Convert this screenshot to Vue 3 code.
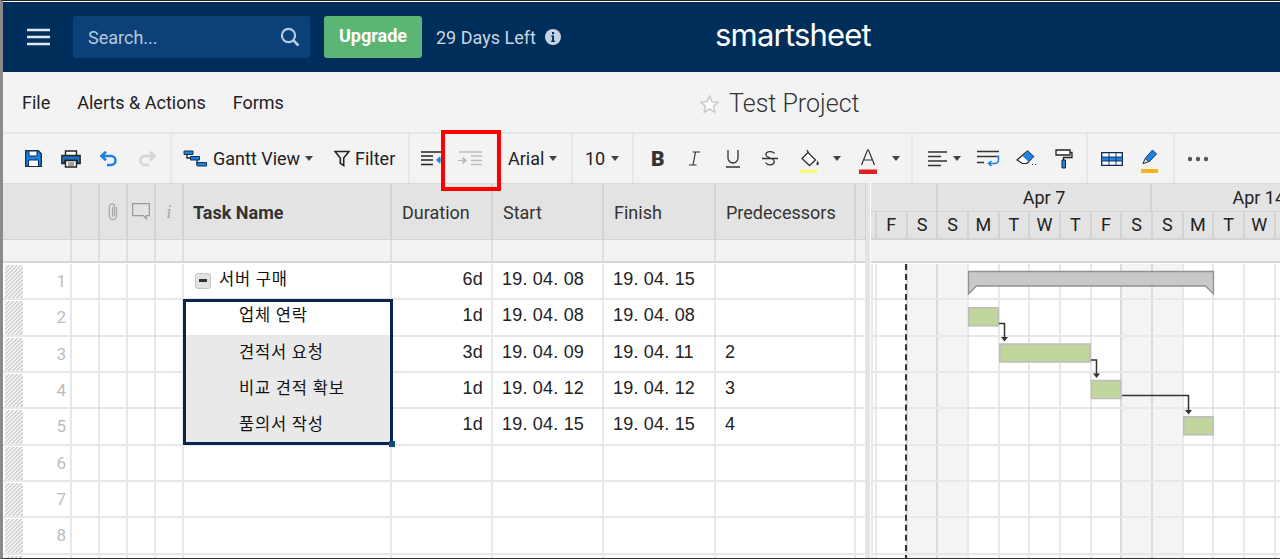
<script setup>
const rows = [
  { n: 1, name: '서버 구매', dur: '6d', start: '19. 04. 08', end: '19. 04. 15', pre: '', parent: true },
  { n: 2, name: '업체 연락', dur: '1d', start: '19. 04. 08', end: '19. 04. 08', pre: '', child: true },
  { n: 3, name: '견적서 요청', dur: '3d', start: '19. 04. 09', end: '19. 04. 11', pre: '2', child: true, sel: true },
  { n: 4, name: '비교 견적 확보', dur: '1d', start: '19. 04. 12', end: '19. 04. 12', pre: '3', child: true, sel: true },
  { n: 5, name: '품의서 작성', dur: '1d', start: '19. 04. 15', end: '19. 04. 15', pre: '4', child: true, sel: true },
  { n: 6 }, { n: 7 }, { n: 8 }, { n: '' }
]
const days = [
  { d: 'F' }, { d: 'S', we: true }, { d: 'S', we: true }, { d: 'M' }, { d: 'T' }, { d: 'W' }, { d: 'T' },
  { d: 'F' }, { d: 'S', we: true }, { d: 'S', we: true }, { d: 'M' }, { d: 'T' }, { d: 'W' }, { d: '' }
]
</script>

<template>
  <div class="page">
    <header class="top">
      <svg class="burger" width="23" height="18" viewBox="0 0 23 18"><path d="M0 2h23M0 9h23M0 16h23" stroke="#dfe7f0" stroke-width="2.6" fill="none"/></svg>
      <div class="search">
        <span>Search...</span>
        <svg width="20" height="20" viewBox="0 0 20 20"><circle cx="8.5" cy="8.5" r="6.6" fill="none" stroke="#b9cbe0" stroke-width="2.2"/><path d="M13.5 13.5l5 5" stroke="#b9cbe0" stroke-width="2.6"/></svg>
      </div>
      <div class="upgrade">Upgrade</div>
      <div class="days">29 Days Left</div>
      <svg class="info" width="16" height="16" viewBox="0 0 16 16"><circle cx="8" cy="8" r="8" fill="#c5d2e2"/><path d="M6.4 6.6h2.6v5.2h1.1v1.3H6v-1.3h1.1V7.9H6.4zM7 3h2.1v2.2H7z" fill="#002e5b"/></svg>
      <div class="logo">smartsheet</div>
    </header>

    <nav class="menu">
      <span class="m1">File</span><span class="m2">Alerts &amp; Actions</span><span class="m3">Forms</span>
      <div class="title">
        <svg width="19" height="18" viewBox="0 0 19 18"><path d="M9.5 1l2.5 5.6 6 .6-4.5 4 1.3 6-5.3-3.1-5.3 3.1 1.3-6-4.5-4 6-.6z" fill="#fbfbfb" stroke="#c4c4c4" stroke-width="1.3"/></svg>
        <span>Test Project</span>
      </div>
    </nav>

    <div class="tools">
      <div class="grp g1">
        <svg width="17" height="17" viewBox="0 0 17 17"><path d="M.7.7h12.6l3 3v12.6H.7z" fill="#1e82e4" stroke="#0b2e55" stroke-width="1.3"/><path d="M4 1h8v5H4z" fill="#fff" stroke="#0b2e55"/><path d="M3.5 10h10v6.5h-10z" fill="#fff" stroke="#0b2e55"/></svg>
        <svg width="20" height="18" viewBox="0 0 20 18"><path d="M4.5 5V1h11v4" fill="#fff" stroke="#222" stroke-width="1.4"/><path d="M.8 5.5h18.4v8H16v-3H4v3H.8z" fill="#1e6fc0" stroke="#222" stroke-width="1.3"/><path d="M4.5 10.500h11v6.500h-11z" fill="#fff" stroke="#222" stroke-width="1.4"/><path d="M7 13h6M7 15h6" stroke="#444"/></svg>
        <svg width="17" height="16" viewBox="0 0 17 16"><path d="M2 5h9a4.500 4.500 0 0 1 0 9H7" fill="none" stroke="#1e82e4" stroke-width="2.600"/><path d="M6 .8L1.500 5 6 9.200" fill="none" stroke="#1e82e4" stroke-width="2.600"/></svg>
        <svg width="17" height="16" viewBox="0 0 17 16"><path d="M15 5H6a4.500 4.500 0 0 0 0 9h4" fill="none" stroke="#d5d5d5" stroke-width="2.600"/><path d="M11 .8L15.500 5 11 9.200" fill="none" stroke="#d5d5d5" stroke-width="2.600"/></svg>
      </div>
      <div class="grp g2">
        <svg width="24" height="17" viewBox="0 0 24 17"><path d="M4 4v4h7M14 9v5h2" fill="none" stroke="#222" stroke-width="1.300"/><path d="M1 1h9v3.500H1zM7.500 6.500h9V10h-9zM14 12.500h9.500V16H14z" fill="#1e82e4" stroke="#14304f"/></svg>
        <span class="lbl">Gantt View</span>
        <i class="caret"></i>
        <svg width="16" height="17" viewBox="0 0 16 17"><path d="M1 1.500h14L9.700 8v7.500l-3.400-2.200V8z" fill="none" stroke="#222" stroke-width="1.600"/></svg>
        <span class="lbl">Filter</span>
      </div>
      <div class="grp g3">
        <svg width="23" height="15" viewBox="0 0 23 15"><path d="M0 1h21M0 5h12M0 9h12M0 13.500h12" stroke="#222" stroke-width="1.300" fill="none"/><path d="M22 9h-3M19 5.800L15.500 9l3.500 3.200z" stroke="#1e82e4" fill="#1e82e4"/></svg>
        <svg width="24" height="15" viewBox="0 0 24 15"><path d="M1 1h23M13 5h11M13 9.500h11M13 13.500h11" stroke="#bdbdbd" stroke-width="1.300" fill="none"/><path d="M0 9.500h5M5 6.300l3.500 3.200L5 12.700z" stroke="#bdbdbd" fill="#bdbdbd"/></svg>
      </div>
      <div class="grp g4"><span class="lbl">Arial</span><i class="caret"></i></div>
      <div class="grp g5"><span class="lbl">10</span><i class="caret"></i></div>
      <div class="grp g6">
        <b class="fb">B</b>
        <svg width="11" height="15" viewBox="0 0 11 15"><path d="M3.500 1H11M0 14h7.500M6.500 1L4 14" stroke="#333" stroke-width="1.200" fill="none"/></svg>
        <svg width="14" height="19" viewBox="0 0 14 19"><path d="M2 1v8a5 5 0 0 0 10 0V1M0 18h14" stroke="#333" stroke-width="1.300" fill="none"/></svg>
        <svg width="16" height="17" viewBox="0 0 16 17"><path d="M12.500 3.500C10.500 .5 3.500 1 4 5c.3 2 3 2.500 4 3M3.500 12.500c2 3.500 9 3 8.700-1-.1-1.500-1.200-2.500-2.700-3M0 8.500h16" stroke="#333" stroke-width="1.300" fill="none"/></svg>
        <svg class="bucket" width="20" height="24" viewBox="0 0 20 24"><path d="M7 1l1.500 3" stroke="#333" stroke-width="1.300"/><path d="M8 3.500l7.500 7.500-6 5.500L2 9.500z" fill="#fff" stroke="#333" stroke-width="1.300"/><path d="M17.500 11.500c1 2 1.800 3 1 4.200-.8 1-2.500.4-2-1.200.2-.8.600-1.700 1-3z" fill="#333"/><path d="M0 20.500h17V24H0z" fill="#fbf67e"/></svg>
        <i class="caret"></i>
        <svg class="acolor" width="18" height="25" viewBox="0 0 18 25"><path d="M2.500 16L8.500 1h1l6 15M5 11h8" stroke="#333" stroke-width="1.200" fill="none"/><path d="M0 20.500h18V25H0z" fill="#de2020"/></svg>
        <i class="caret"></i>
      </div>
      <div class="grp g7">
        <svg width="19" height="16" viewBox="0 0 19 16"><path d="M0 1h19M0 5.500h13M0 10h19M0 14.500h13" stroke="#333" stroke-width="1.300" fill="none"/></svg>
        <i class="caret"></i>
        <svg width="23" height="18" viewBox="0 0 23 18"><path d="M0 1.500h22M0 6.500h22M0 12.500h7" stroke="#333" stroke-width="1.400" fill="none"/><path d="M20 6.500h1.500v3.500a3.500 3.500 0 0 1-3.500 3.500h-6M14.500 11l-3 2.500 3 2.500" stroke="#1e82e4" stroke-width="1.600" fill="none"/></svg>
        <svg width="21" height="17" viewBox="0 0 21 17"><path d="M11.500 1l6 5.500-6.500 7H6.500L1 10z" fill="#fff" stroke="#222" stroke-width="1.200"/><path d="M11.500 1l6 5.500-5 5-6-5.500z" fill="#1e82e4"/><path d="M16 14.500h1M19 14.500h1" stroke="#333"/></svg>
        <svg width="18" height="20" viewBox="0 0 18 20"><path d="M1 1h14v5H1z" fill="#fff" stroke="#222" stroke-width="1.300"/><path d="M15 3.500h2v5H8.500v3" fill="none" stroke="#222" stroke-width="1.300"/><path d="M7 11h3.500v8H7z" fill="#1e82e4" stroke="#222"/></svg>
      </div>
      <div class="grp g8">
        <svg width="22" height="14" viewBox="0 0 22 14"><path d="M.7.700h20.600v12.600H.700z" fill="#fff" stroke="#0d2a4c" stroke-width="1.300"/><path d="M1 5h20v4H1z" fill="#1e82e4"/><path d="M1 5h20M1 9h20M8 1v12M15 1v12" stroke="#0d2a4c" stroke-width=".9"/></svg>
        <svg class="marker" width="18" height="24" viewBox="0 0 18 24"><path d="M12.500 1l4 4-7.500 8-4-3.500z" fill="#1e82e4" stroke="#1a3f66"/><path d="M5 10l-2 4.500 5-1.500" fill="none" stroke="#222"/><path d="M1 20h17v4H1z" fill="#ffb40f"/></svg>
      </div>
      <div class="grp g9">
        <svg width="22" height="6" viewBox="0 0 22 6"><circle cx="3" cy="3" r="2.200" fill="#555"/><circle cx="11" cy="3" r="2.200" fill="#555"/><circle cx="19" cy="3" r="2.200" fill="#555"/></svg>
      </div>
    </div>

    <main class="sheet">
      <section class="table">
        <div class="hdr">
          <div class="c"></div><div class="c"></div>
          <div class="c ic"><svg width="12" height="19" viewBox="0 0 12 19"><path d="M9.500 5v9a3.600 3.600 0 0 1-7.200 0V4.500a2.600 2.600 0 0 1 5.200 0V13a1 1 0 0 1-2 0V5" fill="none" stroke="#a8a8a8" stroke-width="1.200"/></svg></div>
          <div class="c ic"><svg width="18" height="17" viewBox="0 0 18 17"><path d="M.7.700h16.600v12h-3v3l-3-3H.700z" fill="none" stroke="#999" stroke-width="1.200"/></svg></div>
          <div class="c ic"><span class="ii">i</span></div>
          <div class="c th bold">Task Name</div>
          <div class="c th">Duration</div>
          <div class="c th">Start</div>
          <div class="c th">Finish</div>
          <div class="c th">Predecessors</div>
          <div class="c"></div>
        </div>
        <div class="sub">
          <div class="c" v-for="i in 11" :key="i"></div>
        </div>
        <div class="body">
          <div class="row" v-for="(r, idx) in rows" :key="idx">
            <div class="c num"><i class="hatch"></i><span>{{ r.n }}</span></div>
            <div class="c"></div><div class="c"></div><div class="c"></div><div class="c"></div>
            <div class="c name" :class="{ child: r.child, parent: r.parent, sel: r.sel }">
              <span v-if="r.parent" class="minus"></span>
              <span class="txt">{{ r.name }}</span>
            </div>
            <div class="c val right">{{ r.dur }}</div>
            <div class="c val">{{ r.start }}</div>
            <div class="c val">{{ r.end }}</div>
            <div class="c val">{{ r.pre }}</div>
            <div class="c"></div>
          </div>
          <div class="selection"><i class="handle"></i></div>
        </div>
      </section>

      <section class="gantt">
        <div class="months">
          <div class="mo first"></div>
          <div class="mo week">Apr 7</div>
          <div class="mo week">Apr 14</div>
        </div>
        <div class="dayrow"><div class="day" v-for="(d, i) in days" :key="i">{{ d.d }}</div></div>
        <div class="gsub"></div>
        <div class="gbody">
          <div class="gcols"><div class="gcol" v-for="(d, i) in days" :key="i" :class="{ we: d.we }"></div></div>
          <div class="grow" v-for="(r, idx) in rows" :key="idx"></div>
          <svg class="bars" width="409" height="296" viewBox="0 0 409 296">
            <path d="M97.500 8.500h245v22.500l-8-8h-229l-8 8z" fill="#c9c9c9" stroke="#919191" stroke-width="1.300"/>
            <g fill="#c1d69c" stroke="#bdbdbd" stroke-width="1.500">
              <rect x="97.800" y="44.800" width="29.500" height="18"/>
              <rect x="128.800" y="81" width="90.500" height="18"/>
              <rect x="220.300" y="117.500" width="29.500" height="18"/>
              <rect x="312.800" y="153.800" width="29.500" height="18"/>
            </g>
            <g fill="none" stroke="#333" stroke-width="1.500">
              <path d="M128 60.500h5.500V75"/>
              <path d="M220 97h5.500v14"/>
              <path d="M251 132.500h66.500V148"/>
            </g>
            <g fill="#333">
              <path d="M130 74h7l-3.500 4.500z"/>
              <path d="M222 110.500h7l-3.500 4.500z"/>
              <path d="M314 147h7l-3.500 4.500z"/>
            </g>
          </svg>
          <i class="today"></i>
        </div>
      </section>
      <div class="scrolltrack"></div>
    </main>

    <div class="redbox"></div>
  </div>
</template>

<style>
html, body { margin: 0; padding: 0; background: #fff; }
</style>

<style scoped>
.page {
  position: relative;
  width: 1280px;
  height: 559px;
  box-sizing: border-box;
  overflow: hidden;
  background: #fff;
  border-top: 1px solid #222;
  border-bottom: 1px solid #333;
  border-left: 3px solid #8a8a8a;
  padding-top: 1px;
  font-family: Roboto, "Noto Sans CJK KR", sans-serif;
  color: #222;
  display: flex;
  flex-direction: column;
}
.top {
  height: 70px;
  flex: none;
  background: #002e5b;
  display: flex;
  align-items: center;
  color: #c9d6e4;
  position: relative;
}
.burger { margin-left: 24px; }
.search {
  margin-left: 23px;
  width: 237px;
  height: 42px;
  box-sizing: border-box;
  padding: 0 10px 0 15px;
  background: #0b4078;
  border-radius: 3px;
  display: flex;
  align-items: center;
  justify-content: space-between;
  font-size: 18px;
  color: #b8c9dc;
}
.upgrade {
  margin-left: 14px;
  width: 98px;
  height: 42px;
  border-radius: 3px;
  background: #5bb574;
  color: #fff;
  font-size: 18px;
  font-weight: 700;
  display: flex;
  align-items: center;
  justify-content: center;
  padding-bottom: 3px;
  box-sizing: border-box;
}
.days { margin-left: 14px; font-size: 18px; }
.info { margin-left: 9px; }
.logo {
  position: absolute;
  left: 712px;
  top: 14px;
  font-family: Inter, sans-serif;
  font-size: 31px;
  line-height: 38px;
  font-weight: 400;
  letter-spacing: -.8px;
  color: #fff;
}
.menu {
  height: 62px;
  flex: none;
  background: #f3f3f3;
  border-bottom: 2px solid #e6e6e6;
  box-sizing: border-box;
  display: flex;
  align-items: center;
  font-size: 18px;
  position: relative;
}
.m1 { margin-left: 19px; }
.m2 { margin-left: 27px; }
.m3 { margin-left: 27px; }
.title {
  position: absolute;
  left: 697px;
  top: 16px;
  display: flex;
  align-items: center;
  gap: 10px;
  font-size: 25px;
  line-height: 32px;
  color: #333;
  font-weight: 300;
}
.tools {
  height: 49px;
  flex: none;
  background: #f3f3f3;
  display: flex;
}
.grp {
  display: grid;
  align-items: center;
  justify-items: start;
  box-sizing: border-box;
  border-right: 2px solid #e8e8e8;
  flex: none;
}
.lbl { font-size: 18px; white-space: nowrap; }
.caret {
  display: block;
  width: 0;
  height: 0;
  border-left: 4.5px solid transparent;
  border-right: 4.5px solid transparent;
  border-top: 5px solid #444;
}
.g1 { width: 169px; padding-left: 22px; grid-template-columns: 36px 39px 39px 20px; }
.g2 { width: 238px; padding-left: 11px; grid-template-columns: 30px 92px 29px 21px 44px; }
.g3 { width: 88px; padding-left: 11px; grid-template-columns: 37px 24px; }
.g4 { width: 75px; padding-left: 10px; grid-template-columns: 41px 10px; }
.g5 { width: 61px; padding-left: 12px; grid-template-columns: 26px 10px; }
.g6 { width: 279px; padding-left: 17px; grid-template-columns: 38px 37px 36px 38px 33px 26px 33px 10px; }
.g7 { width: 175px; padding-left: 15px; grid-template-columns: 25px 24px 39px 39px 18px; }
.g8 { width: 87px; padding-left: 13px; grid-template-columns: 39px 18px; }
.g9 { width: 99px; padding-left: 12px; border-right: 0; grid-template-columns: 22px; }
.fb { font-size: 21px; font-weight: 900; color: #333; }
.bucket { margin-top: 4px; }
.acolor { margin-top: 5px; }
.marker { margin-top: 4px; }

.sheet {
  flex: 1;
  display: flex;
  position: relative;
  min-height: 0;
}
.table { width: 864px; flex: none; }
.hdr, .sub, .row {
  display: grid;
  grid-template-columns: 69px 28px 28px 28px 28px 208px 101px 111px 112px 140px 11px;
}
.hdr { height: 57px; background: #e3e3e3; border-top: 1px solid #d8d8d8; box-sizing: border-box; }
.sub { height: 23px; background: #f3f3f3; border-bottom: 2px solid #d6d6d6; box-sizing: border-box; }
.c { box-sizing: border-box; border-right: 2px solid #d3d3d3; min-width: 0; }
.hdr .c { border-bottom: 1px solid #d3d3d3; }
.sub .c { border-right-color: #e0e0e0; }
.ic { display: flex; align-items: center; justify-content: center; }
.ii { font-family: "Liberation Serif", serif; font-style: italic; font-size: 19px; color: #a8a8a8; }
.th { display: flex; align-items: center; padding: 2px 0 0 10px; font-size: 18px; color: #333; }
.bold { font-weight: 700; padding-left: 9px; }
.body { position: relative; margin-top: 1px; }
.row { height: 36.33px; box-sizing: border-box; border-bottom: 2px solid #e8e8e8; }
.row .c { border-right-color: #e8e8e8; }
.num { position: relative; display: flex; justify-content: flex-end; align-items: center; padding: 0 4px 0 0; color: #bcbcbc; font-size: 17px; }
.hatch {
  position: absolute;
  left: 2px;
  top: 1px;
  bottom: 0;
  width: 18px;
  background: repeating-linear-gradient(135deg, #d2d2d2 0 1.2px, #f4f4f4 1.2px 2.8px);
}
.name { display: flex; align-items: center; padding: 0 0 6px 11px; font-size: 16.500px; letter-spacing: .8px; color: #111; white-space: nowrap; }
.name.child { padding-left: 55px; }
.name.sel { background: #e9e9e9; }
.minus {
  width: 16px;
  height: 16px;
  box-sizing: border-box;
  margin: 5px 8px 0 0;
  border-radius: 3px;
  background: #e2e2e2 linear-gradient(#333, #333) center / 8px 3px no-repeat;
  border: 1px solid #c6c6c6;
}
.val { display: flex; align-items: center; padding: 0 0 3px 9px; font-family: "Liberation Sans", sans-serif; font-size: 18px; color: #222; white-space: nowrap; letter-spacing: .2px; }
.val.right { justify-content: flex-end; padding: 0 8px 3px 0; }
.selection {
  position: absolute;
  left: 180px;
  top: 35px;
  width: 210px;
  height: 146px;
  box-sizing: border-box;
  border: 3px solid #0a2450;
  pointer-events: none;
}
.handle {
  position: absolute;
  right: -5px;
  bottom: -5px;
  width: 6px;
  height: 6px;
  background: #0f4a80;
}
.scrolltrack {
  position: absolute;
  left: 863px;
  top: 0;
  bottom: 0;
  width: 4px;
  background: #e4e4e4;
}
.gantt { flex: 1; margin-left: 4px; min-width: 0; overflow: hidden; }
.months { display: flex; height: 29px; background: #e3e3e3; border-top: 1px solid #d8d8d8; border-bottom: 1px solid #d3d3d3; box-sizing: border-box; }
.mo { flex: none; box-sizing: border-box; border-right: 2px solid #d3d3d3; text-align: center; font-size: 18px; line-height: 27px; }
.first { width: 66.700px; }
.week { width: 214.700px; }
.dayrow { display: flex; height: 28px; background: #e3e3e3; padding-left: 4px; border-bottom: 2px solid #d3d3d3; box-sizing: border-box; }
.day { flex: none; width: 30.670px; box-sizing: border-box; border-left: 2px solid #d3d3d3; text-align: center; font-size: 18px; line-height: 26px; }
.gsub { height: 23px; background: #f3f3f3; border-bottom: 2px solid #d6d6d6; box-sizing: border-box; }
.gbody { position: relative; margin-top: 1px; box-shadow: inset 2px 0 0 #e8e8e8; }
.gcols { position: absolute; left: 4px; top: 0; bottom: 0; display: flex; }
.gcol { flex: none; width: 30.670px; box-sizing: border-box; border-left: 2px solid #e8e8e8; }
.gcol.we { background: #f4f4f4; border-left-color: #dadada; }
.grow { position: relative; height: 36.33px; box-sizing: border-box; border-bottom: 2px solid #e8e8e8; }
.bars { position: absolute; left: 0; top: -1px; }
.today { position: absolute; left: 34px; top: 0; bottom: 0; width: 0; border-left: 2px dashed #333; }
.redbox {
  position: absolute;
  left: 438px;
  top: 129px;
  width: 60px;
  height: 61px;
  box-sizing: border-box;
  border: 4px solid #f00;
}
</style>
